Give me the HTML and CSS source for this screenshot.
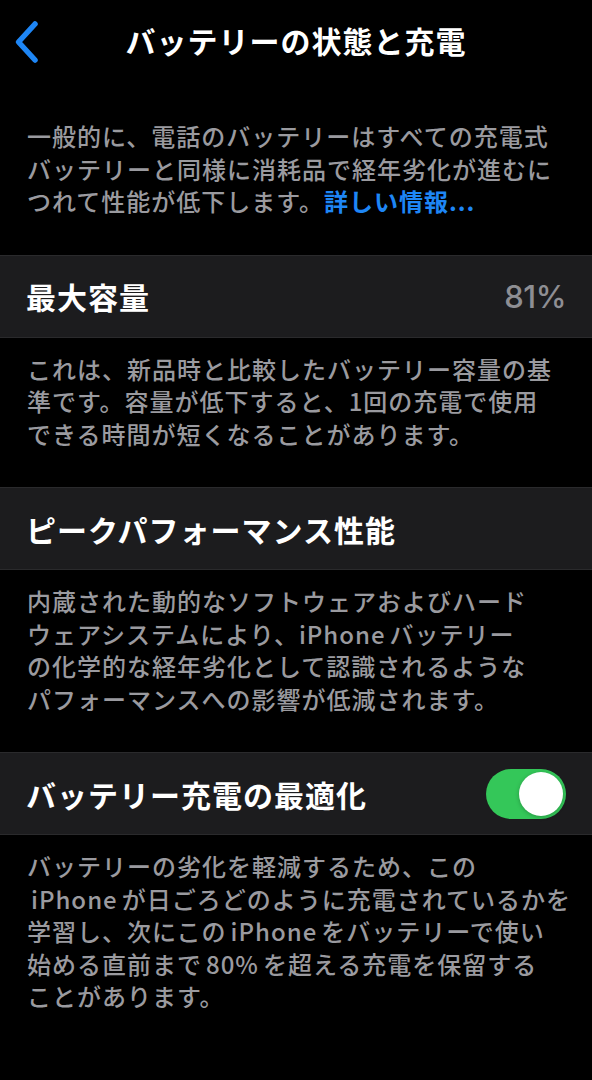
FILE: index.html
```html
<!DOCTYPE html>
<html lang="ja">
<head>
<meta charset="utf-8">
<link rel="stylesheet" href="styles.css">
</head>
<body>
<div class="screen">
  <header class="nav">
    <svg class="back" width="28" height="44" viewBox="0 0 28 44"><path d="M22 4 L5.5 22 L22 40" fill="none" stroke="#1e86f5" stroke-width="5.5" stroke-linecap="round" stroke-linejoin="round"/></svg>
    <h1 class="title">バッテリーの状態と充電</h1>
  </header>

  <p class="desc intro">一般的に、電話のバッテリーはすべての充電式<br>バッテリーと同様に消耗品で経年劣化が進むに<br>つれて性能が低下します。<span class="link">詳しい情報...</span></p>

  <div class="row">
    <span class="label">最大容量</span>
    <span class="value">81%</span>
  </div>
  <p class="desc">これは、新品時と比較したバッテリー容量の基<br>準です。容量が低下すると、1回の充電で使用<br>できる時間が短くなることがあります。</p>

  <div class="row">
    <span class="label">ピークパフォーマンス性能</span>
  </div>
  <p class="desc">内蔵された動的なソフトウェアおよびハード<br>ウェアシステムにより、iPhone<span class="gap"></span>バッテリー<br>の化学的な経年劣化として認識されるような<br>パフォーマンスへの影響が低減されます。</p>

  <div class="row">
    <span class="label">バッテリー充電の最適化</span>
    <span class="toggle"><span class="knob"></span></span>
  </div>
  <p class="desc"><span>バッテリーの劣化を軽減するため、この</span><br><span class="gap"></span>iPhone<span class="gap"></span>が日ごろどのように充電されているかを<br>学習し、次にこの<span class="gap"></span>iPhone<span class="gap"></span>をバッテリーで使い<br>始める直前まで<span class="gap"></span>80%<span class="gap"></span>を超える充電を保留する<br>ことがあります。</p>
</div>
</body>
</html>
```

FILE: styles.css
```css
html, body {
  margin: 0;
  padding: 0;
  background: #000;
}
body {
  font-family: "Noto Sans CJK JP", "Noto Sans", sans-serif;
  color: #fff;
}
.screen {
  width: 592px;
  min-height: 1080px;
  background: #000;
}
.nav {
  position: relative;
  height: 84px;
  display: flex;
  align-items: center;
  justify-content: center;
}
.back {
  position: absolute;
  left: 13px;
  top: 20px;
}
.title {
  margin: 0;
  margin-top: -4px;
  font-size: 30px;
  font-weight: 700;
  letter-spacing: 1px;
  line-height: 40px;
}
.desc {
  margin: 0;
  padding: 15px 20px 37px 27px;
  font-size: 24px;
  font-weight: 500;
  letter-spacing: 1px;
  line-height: 32.5px;
  color: #9a9a9f;
  white-space: nowrap;
}
.intro {
  padding-top: 36px;
}
.gap {
  display: inline-block;
  width: 4px;
}
.link {
  color: #1e86f5;
  font-weight: 700;
}
.row {
  height: 81px;
  background: #1c1c1e;
  border-top: 1px solid #2a2a2c;
  border-bottom: 1px solid #2a2a2c;
  display: flex;
  align-items: center;
  justify-content: space-between;
  padding: 0 26px 0 26px;
}
.label {
  font-size: 30px;
  font-weight: 700;
  letter-spacing: 1px;
  color: #fff;
}
.value {
  font-family: "Inter", "Noto Sans", sans-serif;
  font-size: 31px;
  color: #8e8e93;
  font-weight: 500;
  letter-spacing: -0.5px;
}
.toggle {
  width: 80px;
  height: 50px;
  border-radius: 25px;
  background: #34c759;
  display: flex;
  align-items: center;
  justify-content: flex-end;
  padding: 0 3px;
  box-sizing: border-box;
}
.knob {
  width: 44px;
  height: 44px;
  border-radius: 50%;
  background: #fff;
  box-shadow: 0 1px 4px rgba(0,0,0,0.25);
}
```
